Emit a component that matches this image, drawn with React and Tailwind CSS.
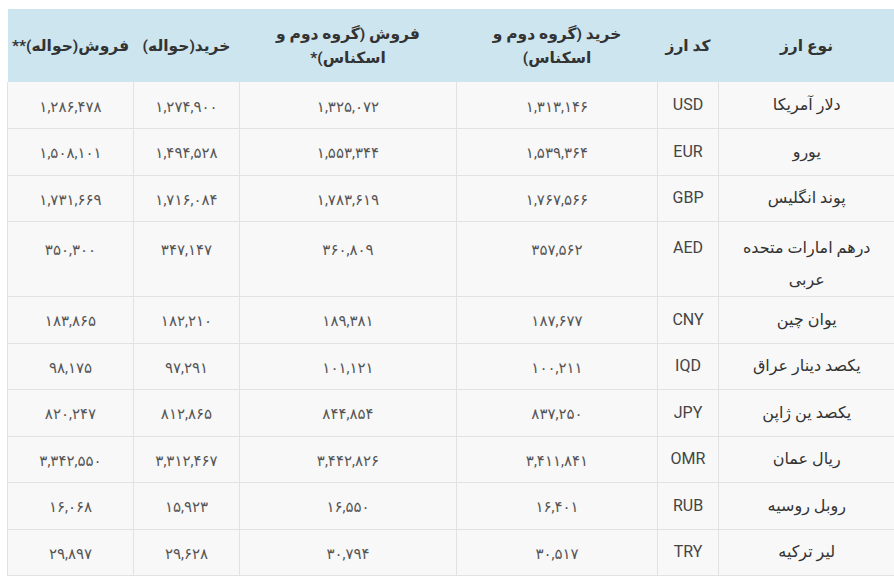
import React from 'react';

const ROWS = [
  { name: 'دلار آمریکا', code: 'USD', buy2: '۱,۳۱۳,۱۴۶', sell2: '۱,۳۲۵,۰۷۲', buyH: '۱,۲۷۴,۹۰۰', sellH: '۱,۲۸۶,۴۷۸' },
  { name: 'یورو', code: 'EUR', buy2: '۱,۵۳۹,۳۶۴', sell2: '۱,۵۵۳,۳۴۴', buyH: '۱,۴۹۴,۵۲۸', sellH: '۱,۵۰۸,۱۰۱' },
  { name: 'پوند انگلیس', code: 'GBP', buy2: '۱,۷۶۷,۵۶۶', sell2: '۱,۷۸۳,۶۱۹', buyH: '۱,۷۱۶,۰۸۴', sellH: '۱,۷۳۱,۶۶۹' },
  { name: 'درهم امارات متحده عربی', code: 'AED', buy2: '۳۵۷,۵۶۲', sell2: '۳۶۰,۸۰۹', buyH: '۳۴۷,۱۴۷', sellH: '۳۵۰,۳۰۰', tall: true },
  { name: 'یوان چین', code: 'CNY', buy2: '۱۸۷,۶۷۷', sell2: '۱۸۹,۳۸۱', buyH: '۱۸۲,۲۱۰', sellH: '۱۸۳,۸۶۵' },
  { name: 'یکصد دینار عراق', code: 'IQD', buy2: '۱۰۰,۲۱۱', sell2: '۱۰۱,۱۲۱', buyH: '۹۷,۲۹۱', sellH: '۹۸,۱۷۵' },
  { name: 'یکصد ین ژاپن', code: 'JPY', buy2: '۸۳۷,۲۵۰', sell2: '۸۴۴,۸۵۴', buyH: '۸۱۲,۸۶۵', sellH: '۸۲۰,۲۴۷' },
  { name: 'ریال عمان', code: 'OMR', buy2: '۳,۴۱۱,۸۴۱', sell2: '۳,۴۴۲,۸۲۶', buyH: '۳,۳۱۲,۴۶۷', sellH: '۳,۳۴۲,۵۵۰' },
  { name: 'روبل روسیه', code: 'RUB', buy2: '۱۶,۴۰۱', sell2: '۱۶,۵۵۰', buyH: '۱۵,۹۲۳', sellH: '۱۶,۰۶۸' },
  { name: 'لیر ترکیه', code: 'TRY', buy2: '۳۰,۵۱۷', sell2: '۳۰,۷۹۴', buyH: '۲۹,۶۲۸', sellH: '۲۹,۸۹۷' },
];

const cell = 'border-l border-b border-[#e2e2e2] text-center';

export default function App() {
  return (
    <div className="min-h-[584px] w-[894px] overflow-hidden bg-white pl-[7px] pt-[9px] font-['Roboto','DejaVu_Sans',sans-serif]">
      <table dir="rtl" className="w-[887px] table-fixed border-collapse">
        <colgroup>
          <col className="w-[176px]" />
          <col className="w-[61px]" />
          <col className="w-[201px]" />
          <col className="w-[217px]" />
          <col className="w-[106px]" />
          <col className="w-[126px]" />
        </colgroup>
        <thead>
          <tr className="h-[73px] bg-[#cde5ef] text-[15.5px] font-bold leading-[24px] text-[#333]">
            <th className="px-3">نوع ارز</th>
            <th className="px-1">کد ارز</th>
            <th className="px-8">خرید (گروه دوم و اسکناس)</th>
            <th className="px-8">فروش (گروه دوم و اسکناس)*</th>
            <th className="px-1">خرید(حواله)</th>
            <th className="px-0">فروش(حواله)**</th>
          </tr>
        </thead>
        <tbody className="bg-[#f8f8f8] text-[15px] text-[#555]">
          {ROWS.map((r) => {
            const v = r.tall ? 'align-top pt-[10px]' : 'align-middle';
            const n = r.tall ? 'align-top pt-[12px]' : 'align-middle pt-[3px]';
            return (
              <tr key={r.code} className={r.tall ? 'h-[73px]' : 'h-[46.5px]'}>
                <td className={`${cell} ${v} px-5 text-[16px] leading-[32px] text-[#333]`}>{r.name}</td>
                <td className={`${cell} ${v} text-[16px] leading-[32px] text-[#444]`}>{r.code}</td>
                <td className={`${cell} ${n} leading-[32px]`}>{r.buy2}</td>
                <td className={`${cell} ${n} leading-[32px]`}>{r.sell2}</td>
                <td className={`${cell} ${n} leading-[32px]`}>{r.buyH}</td>
                <td className={`${cell} ${n} leading-[32px]`}>{r.sellH}</td>
              </tr>
            );
          })}
        </tbody>
      </table>
    </div>
  );
}
